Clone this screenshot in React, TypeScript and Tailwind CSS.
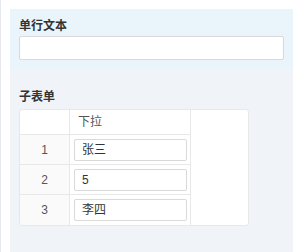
import React from 'react';

const rows = [
    { no: 1, value: '张三' },
    { no: 2, value: '5' },
    { no: 3, value: '李四' },
];

const App: React.FC = () => {
    return (
        <div
            className="w-[293px] h-[252px] bg-white flex overflow-hidden"
            style={{ fontFamily: '"Liberation Sans", "Noto Sans CJK SC", sans-serif' }}
        >
            {/* left rail */}
            <div className="w-[10px] shrink-0 border-l border-[#e6e8ee] bg-white" />

            <div className="flex-1 flex flex-col pt-[9px]">
                {/* 单行文本 */}
                <div className="bg-[#e9f5fa] pl-[9px] pr-[9px] pt-[9px] h-[60px]">
                    <div className="text-[12px] leading-[16px] font-bold text-[#333]">单行文本</div>
                    <input
                        type="text"
                        className="mt-[2px] w-[265px] h-[24px] bg-white border border-[#d9d9d9] rounded-[2px] outline-none"
                    />
                </div>

                {/* 子表单 */}
                <div className="flex-1 bg-[#f0f3f7] pl-[9px] pt-[20px]">
                    <div className="text-[12px] leading-[16px] font-bold text-[#333]">子表单</div>
                    <div className="mt-[4px] w-[230px] bg-white border border-[#e8e8e8] rounded-[3px] flex overflow-hidden">
                        <div className="w-[171px] shrink-0 border-r border-[#e8e8e8]">
                            <div className="flex h-[25px] border-b border-[#e8e8e8]">
                                <div className="w-[50px] border-r border-[#e8e8e8]" />
                                <div className="flex-1 flex items-center pl-[8px] text-[12px] text-[#555]">下拉</div>
                            </div>
                            {rows.map((r, i) => (
                                <div
                                    key={r.no}
                                    className={`flex h-[30px] ${i < rows.length - 1 ? 'border-b border-[#e8e8e8]' : ''}`}
                                >
                                    <div className="w-[50px] bg-[#fafafa] border-r border-[#e8e8e8] flex items-center justify-center text-[12px] text-[#555]">
                                        {r.no}
                                    </div>
                                    <div className="flex-1 flex items-center pl-[4px] pr-[3px]">
                                        <div className="w-full h-[22px] border border-[#d9d9d9] rounded-[2px] flex items-center pl-[7px] text-[12px] text-[#333]">
                                            {r.value}
                                        </div>
                                    </div>
                                </div>
                            ))}
                        </div>
                        <div className="flex-1" />
                    </div>
                </div>
            </div>
        </div>
    );
};

export default App;
